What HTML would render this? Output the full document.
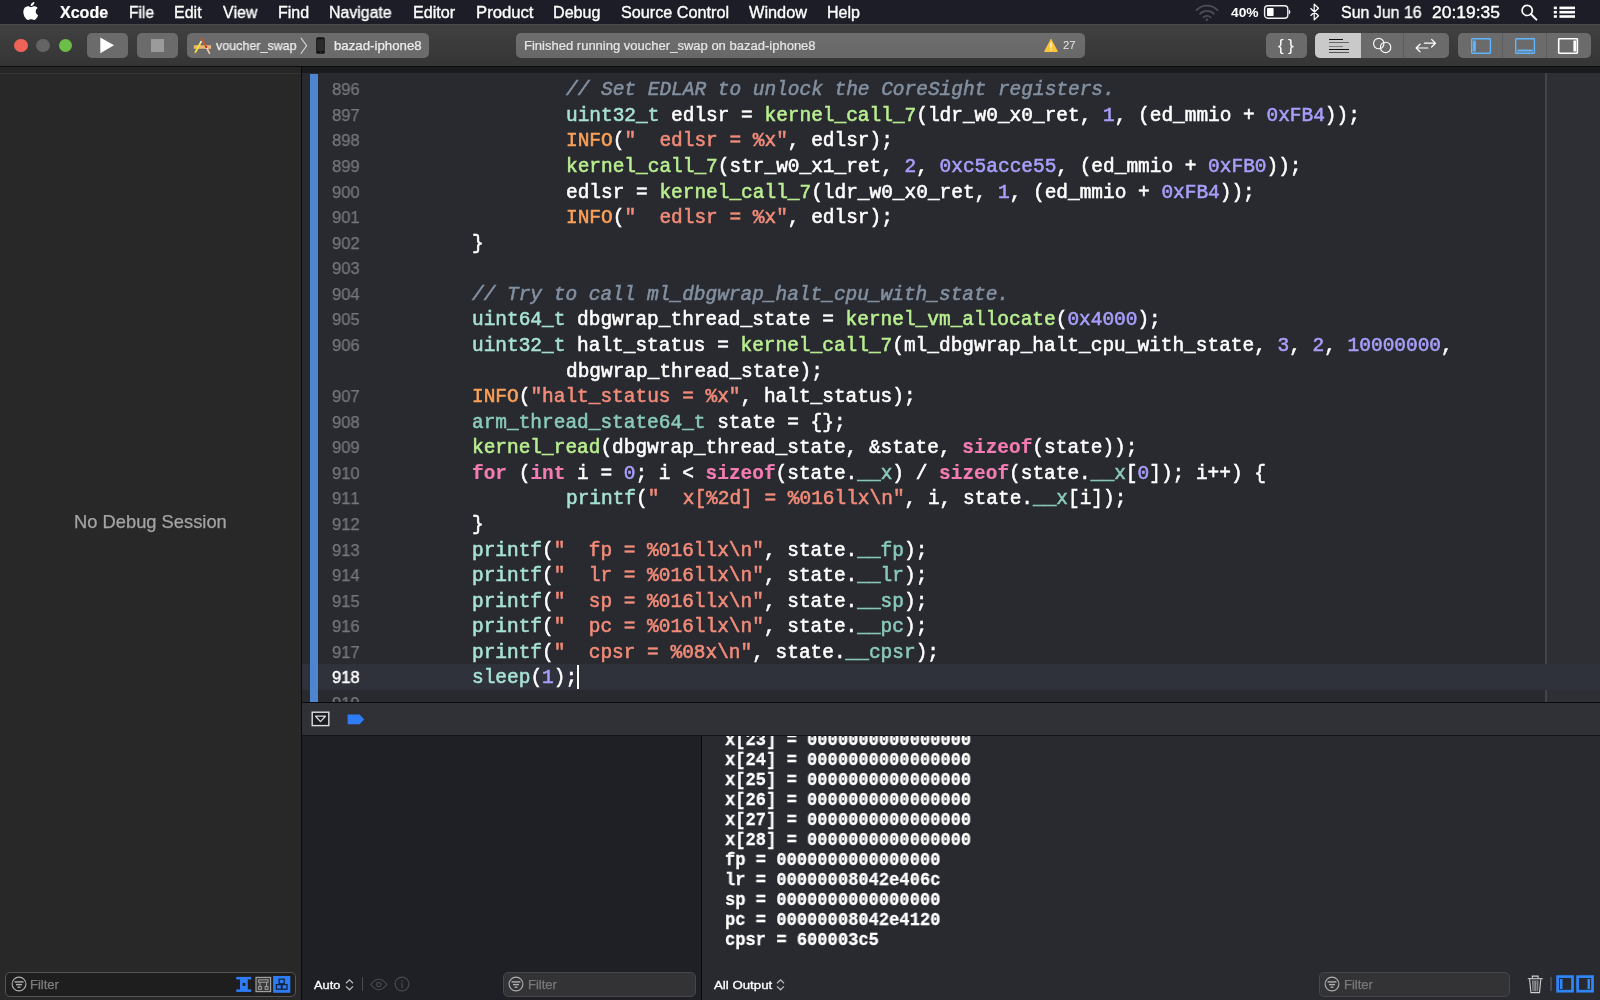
<!DOCTYPE html>
<html><head><meta charset="utf-8"><title>Xcode</title><style>
html,body{margin:0;padding:0;background:#292a30;}
body{width:1600px;height:1000px;overflow:hidden;position:relative;font-family:"Liberation Sans",sans-serif;}
.r{position:absolute;display:block;}
.t{position:absolute;white-space:pre;transform-origin:0 50%;will-change:transform;font-kerning:none;}
.t b{font-weight:700;-webkit-text-stroke:0.2px;}
</style></head><body>
<div class="r" style="left:0px;top:0px;width:1600px;height:24px;background:#1c1d26;"></div>
<div class="r" style="left:0px;top:24px;width:1600px;height:42px;background:linear-gradient(#414141,#353535);"></div>
<div class="r" style="left:0px;top:24px;width:1600px;height:1px;background:#4a4a4a;"></div>
<div class="r" style="left:0px;top:66px;width:1600px;height:1px;background:#0c0c0c;"></div>
<div class="r" style="left:0px;top:67px;width:301px;height:933px;background:#282828;"></div>
<div class="r" style="left:0px;top:67px;width:301px;height:6px;background:#262626;"></div>
<div class="r" style="left:0px;top:73px;width:301px;height:1px;background:#343434;"></div>
<div class="r" style="left:301px;top:67px;width:1px;height:933px;background:#0a0a0a;"></div>
<div class="r" style="left:302px;top:67px;width:1298px;height:6px;background:#1a1b1f;"></div>
<div class="r" style="left:302px;top:73px;width:1298px;height:629px;background:#292a30;"></div>
<div class="r" style="left:1547px;top:73px;width:53px;height:629px;background:#2e2f35;"></div>
<div class="r" style="left:1545px;top:73px;width:2px;height:629px;background:#44454b;"></div>
<div class="r" style="left:302px;top:664px;width:1298px;height:26px;background:#2f323b;"></div>
<div class="r" style="left:310px;top:74px;width:7.5px;height:628px;background:#4d85d1;"></div>
<div class="r" style="left:302px;top:702px;width:1298px;height:1px;background:#0b0b0d;"></div>
<div class="r" style="left:302px;top:703px;width:1298px;height:32px;background:#303136;"></div>
<div class="r" style="left:302px;top:735px;width:1298px;height:1.3px;background:#131418;"></div>
<div class="r" style="left:302px;top:736px;width:399px;height:264px;background:#1f2025;"></div>
<div class="r" style="left:701px;top:736px;width:1px;height:264px;background:#0a0a0c;"></div>
<div class="r" style="left:702px;top:736px;width:898px;height:264px;background:#292a30;"></div>
<div class="t" id="t1" style="left:565.60px;top:78px;height:25px;line-height:25px;font-size:19.463px;color:#ffffff;font-family:'Liberation Mono', monospace;-webkit-text-stroke:0.55px;"><span style="color:#8390a0"><i>// Set EDLAR to unlock the CoreSight registers.</i></span></div>
<div class="t" id="t2" style="left:331.80px;top:78px;height:22px;line-height:22px;font-size:17.2px;color:#77777b;font-family:'Liberation Sans', sans-serif;transform:scaleX(0.9691);-webkit-text-stroke:0.25px;">896</div>
<div class="t" id="t3" style="left:565.60px;top:104px;height:25px;line-height:25px;font-size:19.463px;color:#ffffff;font-family:'Liberation Mono', monospace;-webkit-text-stroke:0.55px;"><span style="color:#a8e2d4">uint32_t</span><span style="color:#ffffff"> edlsr = </span><span style="color:#b9ee90">kernel_call_7</span><span style="color:#ffffff">(ldr_w0_x0_ret, </span><span style="color:#a89ffa">1</span><span style="color:#ffffff">, (ed_mmio + </span><span style="color:#a89ffa">0xFB4</span><span style="color:#ffffff">));</span></div>
<div class="t" id="t4" style="left:331.80px;top:104px;height:22px;line-height:22px;font-size:17.2px;color:#77777b;font-family:'Liberation Sans', sans-serif;transform:scaleX(0.9691);-webkit-text-stroke:0.25px;">897</div>
<div class="t" id="t5" style="left:565.60px;top:129px;height:25px;line-height:25px;font-size:19.463px;color:#ffffff;font-family:'Liberation Mono', monospace;-webkit-text-stroke:0.55px;"><span style="color:#fca259">INFO</span><span style="color:#ffffff">(</span><span style="color:#f28b79">&quot;  edlsr = %x&quot;</span><span style="color:#ffffff">, edlsr);</span></div>
<div class="t" id="t6" style="left:331.80px;top:129px;height:22px;line-height:22px;font-size:17.2px;color:#77777b;font-family:'Liberation Sans', sans-serif;transform:scaleX(0.9691);-webkit-text-stroke:0.25px;">898</div>
<div class="t" id="t7" style="left:565.60px;top:155px;height:25px;line-height:25px;font-size:19.463px;color:#ffffff;font-family:'Liberation Mono', monospace;-webkit-text-stroke:0.55px;"><span style="color:#b9ee90">kernel_call_7</span><span style="color:#ffffff">(str_w0_x1_ret, </span><span style="color:#a89ffa">2</span><span style="color:#ffffff">, </span><span style="color:#a89ffa">0xc5acce55</span><span style="color:#ffffff">, (ed_mmio + </span><span style="color:#a89ffa">0xFB0</span><span style="color:#ffffff">));</span></div>
<div class="t" id="t8" style="left:331.80px;top:155px;height:22px;line-height:22px;font-size:17.2px;color:#77777b;font-family:'Liberation Sans', sans-serif;transform:scaleX(0.9691);-webkit-text-stroke:0.25px;">899</div>
<div class="t" id="t9" style="left:565.60px;top:181px;height:25px;line-height:25px;font-size:19.463px;color:#ffffff;font-family:'Liberation Mono', monospace;-webkit-text-stroke:0.55px;"><span style="color:#ffffff">edlsr = </span><span style="color:#b9ee90">kernel_call_7</span><span style="color:#ffffff">(ldr_w0_x0_ret, </span><span style="color:#a89ffa">1</span><span style="color:#ffffff">, (ed_mmio + </span><span style="color:#a89ffa">0xFB4</span><span style="color:#ffffff">));</span></div>
<div class="t" id="t10" style="left:331.80px;top:181px;height:22px;line-height:22px;font-size:17.2px;color:#77777b;font-family:'Liberation Sans', sans-serif;transform:scaleX(0.9691);-webkit-text-stroke:0.25px;">900</div>
<div class="t" id="t11" style="left:565.60px;top:206px;height:25px;line-height:25px;font-size:19.463px;color:#ffffff;font-family:'Liberation Mono', monospace;-webkit-text-stroke:0.55px;"><span style="color:#fca259">INFO</span><span style="color:#ffffff">(</span><span style="color:#f28b79">&quot;  edlsr = %x&quot;</span><span style="color:#ffffff">, edlsr);</span></div>
<div class="t" id="t12" style="left:331.80px;top:206px;height:22px;line-height:22px;font-size:17.2px;color:#77777b;font-family:'Liberation Sans', sans-serif;transform:scaleX(0.9691);-webkit-text-stroke:0.25px;">901</div>
<div class="t" id="t13" style="left:472.40px;top:232px;height:25px;line-height:25px;font-size:19.463px;color:#ffffff;font-family:'Liberation Mono', monospace;-webkit-text-stroke:0.55px;"><span style="color:#ffffff">}</span></div>
<div class="t" id="t14" style="left:331.80px;top:232px;height:22px;line-height:22px;font-size:17.2px;color:#77777b;font-family:'Liberation Sans', sans-serif;transform:scaleX(0.9691);-webkit-text-stroke:0.25px;">902</div>
<div class="t" id="t15" style="left:331.80px;top:257px;height:22px;line-height:22px;font-size:17.2px;color:#77777b;font-family:'Liberation Sans', sans-serif;transform:scaleX(0.9691);-webkit-text-stroke:0.25px;">903</div>
<div class="t" id="t16" style="left:472.40px;top:283px;height:25px;line-height:25px;font-size:19.463px;color:#ffffff;font-family:'Liberation Mono', monospace;-webkit-text-stroke:0.55px;"><span style="color:#8390a0"><i>// Try to call ml_dbgwrap_halt_cpu_with_state.</i></span></div>
<div class="t" id="t17" style="left:331.80px;top:283px;height:22px;line-height:22px;font-size:17.2px;color:#77777b;font-family:'Liberation Sans', sans-serif;transform:scaleX(0.9691);-webkit-text-stroke:0.25px;">904</div>
<div class="t" id="t18" style="left:472.40px;top:308px;height:25px;line-height:25px;font-size:19.463px;color:#ffffff;font-family:'Liberation Mono', monospace;-webkit-text-stroke:0.55px;"><span style="color:#a8e2d4">uint64_t</span><span style="color:#ffffff"> dbgwrap_thread_state = </span><span style="color:#b9ee90">kernel_vm_allocate</span><span style="color:#ffffff">(</span><span style="color:#a89ffa">0x4000</span><span style="color:#ffffff">);</span></div>
<div class="t" id="t19" style="left:331.80px;top:308px;height:22px;line-height:22px;font-size:17.2px;color:#77777b;font-family:'Liberation Sans', sans-serif;transform:scaleX(0.9691);-webkit-text-stroke:0.25px;">905</div>
<div class="t" id="t20" style="left:472.40px;top:334px;height:25px;line-height:25px;font-size:19.463px;color:#ffffff;font-family:'Liberation Mono', monospace;-webkit-text-stroke:0.55px;"><span style="color:#a8e2d4">uint32_t</span><span style="color:#ffffff"> halt_status = </span><span style="color:#b9ee90">kernel_call_7</span><span style="color:#ffffff">(ml_dbgwrap_halt_cpu_with_state, </span><span style="color:#a89ffa">3</span><span style="color:#ffffff">, </span><span style="color:#a89ffa">2</span><span style="color:#ffffff">, </span><span style="color:#a89ffa">10000000</span><span style="color:#ffffff">,</span></div>
<div class="t" id="t21" style="left:331.80px;top:334px;height:22px;line-height:22px;font-size:17.2px;color:#77777b;font-family:'Liberation Sans', sans-serif;transform:scaleX(0.9691);-webkit-text-stroke:0.25px;">906</div>
<div class="t" id="t22" style="left:565.60px;top:360px;height:25px;line-height:25px;font-size:19.463px;color:#ffffff;font-family:'Liberation Mono', monospace;-webkit-text-stroke:0.55px;"><span style="color:#ffffff">dbgwrap_thread_state);</span></div>
<div class="t" id="t23" style="left:472.40px;top:385px;height:25px;line-height:25px;font-size:19.463px;color:#ffffff;font-family:'Liberation Mono', monospace;-webkit-text-stroke:0.55px;"><span style="color:#fca259">INFO</span><span style="color:#ffffff">(</span><span style="color:#f28b79">&quot;halt_status = %x&quot;</span><span style="color:#ffffff">, halt_status);</span></div>
<div class="t" id="t24" style="left:331.80px;top:385px;height:22px;line-height:22px;font-size:17.2px;color:#77777b;font-family:'Liberation Sans', sans-serif;transform:scaleX(0.9691);-webkit-text-stroke:0.25px;">907</div>
<div class="t" id="t25" style="left:472.40px;top:411px;height:25px;line-height:25px;font-size:19.463px;color:#ffffff;font-family:'Liberation Mono', monospace;-webkit-text-stroke:0.55px;"><span style="color:#8acabb">arm_thread_state64_t</span><span style="color:#ffffff"> state = {};</span></div>
<div class="t" id="t26" style="left:331.80px;top:411px;height:22px;line-height:22px;font-size:17.2px;color:#77777b;font-family:'Liberation Sans', sans-serif;transform:scaleX(0.9691);-webkit-text-stroke:0.25px;">908</div>
<div class="t" id="t27" style="left:472.40px;top:436px;height:25px;line-height:25px;font-size:19.463px;color:#ffffff;font-family:'Liberation Mono', monospace;-webkit-text-stroke:0.55px;"><span style="color:#b9ee90">kernel_read</span><span style="color:#ffffff">(dbgwrap_thread_state, &amp;state, </span><span style="color:#f47cb2"><b>sizeof</b></span><span style="color:#ffffff">(state));</span></div>
<div class="t" id="t28" style="left:331.80px;top:436px;height:22px;line-height:22px;font-size:17.2px;color:#77777b;font-family:'Liberation Sans', sans-serif;transform:scaleX(0.9691);-webkit-text-stroke:0.25px;">909</div>
<div class="t" id="t29" style="left:472.40px;top:462px;height:25px;line-height:25px;font-size:19.463px;color:#ffffff;font-family:'Liberation Mono', monospace;-webkit-text-stroke:0.55px;"><span style="color:#f47cb2"><b>for</b></span><span style="color:#ffffff"> (</span><span style="color:#f47cb2"><b>int</b></span><span style="color:#ffffff"> i = </span><span style="color:#a89ffa">0</span><span style="color:#ffffff">; i &lt; </span><span style="color:#f47cb2"><b>sizeof</b></span><span style="color:#ffffff">(state.</span><span style="color:#8acabb">__x</span><span style="color:#ffffff">) / </span><span style="color:#f47cb2"><b>sizeof</b></span><span style="color:#ffffff">(state.</span><span style="color:#8acabb">__x</span><span style="color:#ffffff">[</span><span style="color:#a89ffa">0</span><span style="color:#ffffff">]); i++) {</span></div>
<div class="t" id="t30" style="left:331.80px;top:462px;height:22px;line-height:22px;font-size:17.2px;color:#77777b;font-family:'Liberation Sans', sans-serif;transform:scaleX(0.9691);-webkit-text-stroke:0.25px;">910</div>
<div class="t" id="t31" style="left:565.60px;top:487px;height:25px;line-height:25px;font-size:19.463px;color:#ffffff;font-family:'Liberation Mono', monospace;-webkit-text-stroke:0.55px;"><span style="color:#a8e2d4">printf</span><span style="color:#ffffff">(</span><span style="color:#f28b79">&quot;  x[%2d] = %016llx\n&quot;</span><span style="color:#ffffff">, i, state.</span><span style="color:#8acabb">__x</span><span style="color:#ffffff">[i]);</span></div>
<div class="t" id="t32" style="left:331.80px;top:487px;height:22px;line-height:22px;font-size:17.2px;color:#77777b;font-family:'Liberation Sans', sans-serif;transform:scaleX(0.9691);-webkit-text-stroke:0.25px;">911</div>
<div class="t" id="t33" style="left:472.40px;top:513px;height:25px;line-height:25px;font-size:19.463px;color:#ffffff;font-family:'Liberation Mono', monospace;-webkit-text-stroke:0.55px;"><span style="color:#ffffff">}</span></div>
<div class="t" id="t34" style="left:331.80px;top:513px;height:22px;line-height:22px;font-size:17.2px;color:#77777b;font-family:'Liberation Sans', sans-serif;transform:scaleX(0.9691);-webkit-text-stroke:0.25px;">912</div>
<div class="t" id="t35" style="left:472.40px;top:539px;height:25px;line-height:25px;font-size:19.463px;color:#ffffff;font-family:'Liberation Mono', monospace;-webkit-text-stroke:0.55px;"><span style="color:#a8e2d4">printf</span><span style="color:#ffffff">(</span><span style="color:#f28b79">&quot;  fp = %016llx\n&quot;</span><span style="color:#ffffff">, state.</span><span style="color:#8acabb">__fp</span><span style="color:#ffffff">);</span></div>
<div class="t" id="t36" style="left:331.80px;top:539px;height:22px;line-height:22px;font-size:17.2px;color:#77777b;font-family:'Liberation Sans', sans-serif;transform:scaleX(0.9691);-webkit-text-stroke:0.25px;">913</div>
<div class="t" id="t37" style="left:472.40px;top:564px;height:25px;line-height:25px;font-size:19.463px;color:#ffffff;font-family:'Liberation Mono', monospace;-webkit-text-stroke:0.55px;"><span style="color:#a8e2d4">printf</span><span style="color:#ffffff">(</span><span style="color:#f28b79">&quot;  lr = %016llx\n&quot;</span><span style="color:#ffffff">, state.</span><span style="color:#8acabb">__lr</span><span style="color:#ffffff">);</span></div>
<div class="t" id="t38" style="left:331.80px;top:564px;height:22px;line-height:22px;font-size:17.2px;color:#77777b;font-family:'Liberation Sans', sans-serif;transform:scaleX(0.9691);-webkit-text-stroke:0.25px;">914</div>
<div class="t" id="t39" style="left:472.40px;top:590px;height:25px;line-height:25px;font-size:19.463px;color:#ffffff;font-family:'Liberation Mono', monospace;-webkit-text-stroke:0.55px;"><span style="color:#a8e2d4">printf</span><span style="color:#ffffff">(</span><span style="color:#f28b79">&quot;  sp = %016llx\n&quot;</span><span style="color:#ffffff">, state.</span><span style="color:#8acabb">__sp</span><span style="color:#ffffff">);</span></div>
<div class="t" id="t40" style="left:331.80px;top:590px;height:22px;line-height:22px;font-size:17.2px;color:#77777b;font-family:'Liberation Sans', sans-serif;transform:scaleX(0.9691);-webkit-text-stroke:0.25px;">915</div>
<div class="t" id="t41" style="left:472.40px;top:615px;height:25px;line-height:25px;font-size:19.463px;color:#ffffff;font-family:'Liberation Mono', monospace;-webkit-text-stroke:0.55px;"><span style="color:#a8e2d4">printf</span><span style="color:#ffffff">(</span><span style="color:#f28b79">&quot;  pc = %016llx\n&quot;</span><span style="color:#ffffff">, state.</span><span style="color:#8acabb">__pc</span><span style="color:#ffffff">);</span></div>
<div class="t" id="t42" style="left:331.80px;top:615px;height:22px;line-height:22px;font-size:17.2px;color:#77777b;font-family:'Liberation Sans', sans-serif;transform:scaleX(0.9691);-webkit-text-stroke:0.25px;">916</div>
<div class="t" id="t43" style="left:472.40px;top:641px;height:25px;line-height:25px;font-size:19.463px;color:#ffffff;font-family:'Liberation Mono', monospace;-webkit-text-stroke:0.55px;"><span style="color:#a8e2d4">printf</span><span style="color:#ffffff">(</span><span style="color:#f28b79">&quot;  cpsr = %08x\n&quot;</span><span style="color:#ffffff">, state.</span><span style="color:#8acabb">__cpsr</span><span style="color:#ffffff">);</span></div>
<div class="t" id="t44" style="left:331.80px;top:641px;height:22px;line-height:22px;font-size:17.2px;color:#77777b;font-family:'Liberation Sans', sans-serif;transform:scaleX(0.9691);-webkit-text-stroke:0.25px;">917</div>
<div class="t" id="t45" style="left:472.40px;top:666px;height:25px;line-height:25px;font-size:19.463px;color:#ffffff;font-family:'Liberation Mono', monospace;-webkit-text-stroke:0.55px;"><span style="color:#a8e2d4">sleep</span><span style="color:#ffffff">(</span><span style="color:#a89ffa">1</span><span style="color:#ffffff">);</span></div>
<div class="t" id="t46" style="left:331.80px;top:666px;height:22px;line-height:22px;font-size:17.2px;color:#ffffff;font-family:'Liberation Sans', sans-serif;transform:scaleX(0.9691);-webkit-text-stroke:0.45px;">918</div>
<div class="r" style="left:577.4px;top:665px;width:1.7px;height:24px;background:#ffffff;"></div>
<div class="r" style="left:302px;top:690px;width:200px;height:12px;overflow:hidden">
<div class="t" style="left:30.2px;top:2px;height:22px;line-height:22px;font-size:17.2px;color:#77777b;transform:scaleX(0.969);-webkit-text-stroke:0.25px;">919</div>
</div>
<div class="r" style="left:702px;top:736px;width:898px;height:264px;overflow:hidden">
<div class="t" style="left:22.90px;top:-7px;height:24px;line-height:24px;font-size:18.4px;font-weight:700;color:#fff;font-family:'Liberation Mono', monospace;-webkit-text-stroke:0.3px;transform:scaleX(0.9294);">x[23] = 0000000000000000</div>
<div class="t" style="left:22.90px;top:13px;height:24px;line-height:24px;font-size:18.4px;font-weight:700;color:#fff;font-family:'Liberation Mono', monospace;-webkit-text-stroke:0.3px;transform:scaleX(0.9294);">x[24] = 0000000000000000</div>
<div class="t" style="left:22.90px;top:33px;height:24px;line-height:24px;font-size:18.4px;font-weight:700;color:#fff;font-family:'Liberation Mono', monospace;-webkit-text-stroke:0.3px;transform:scaleX(0.9294);">x[25] = 0000000000000000</div>
<div class="t" style="left:22.90px;top:53px;height:24px;line-height:24px;font-size:18.4px;font-weight:700;color:#fff;font-family:'Liberation Mono', monospace;-webkit-text-stroke:0.3px;transform:scaleX(0.9294);">x[26] = 0000000000000000</div>
<div class="t" style="left:22.90px;top:73px;height:24px;line-height:24px;font-size:18.4px;font-weight:700;color:#fff;font-family:'Liberation Mono', monospace;-webkit-text-stroke:0.3px;transform:scaleX(0.9294);">x[27] = 0000000000000000</div>
<div class="t" style="left:22.90px;top:93px;height:24px;line-height:24px;font-size:18.4px;font-weight:700;color:#fff;font-family:'Liberation Mono', monospace;-webkit-text-stroke:0.3px;transform:scaleX(0.9294);">x[28] = 0000000000000000</div>
<div class="t" style="left:22.90px;top:113px;height:24px;line-height:24px;font-size:18.4px;font-weight:700;color:#fff;font-family:'Liberation Mono', monospace;-webkit-text-stroke:0.3px;transform:scaleX(0.9294);">fp = 0000000000000000</div>
<div class="t" style="left:22.90px;top:133px;height:24px;line-height:24px;font-size:18.4px;font-weight:700;color:#fff;font-family:'Liberation Mono', monospace;-webkit-text-stroke:0.3px;transform:scaleX(0.9294);">lr = 00000008042e406c</div>
<div class="t" style="left:22.90px;top:153px;height:24px;line-height:24px;font-size:18.4px;font-weight:700;color:#fff;font-family:'Liberation Mono', monospace;-webkit-text-stroke:0.3px;transform:scaleX(0.9294);">sp = 0000000000000000</div>
<div class="t" style="left:22.90px;top:173px;height:24px;line-height:24px;font-size:18.4px;font-weight:700;color:#fff;font-family:'Liberation Mono', monospace;-webkit-text-stroke:0.3px;transform:scaleX(0.9294);">pc = 00000008042e4120</div>
<div class="t" style="left:22.90px;top:193px;height:24px;line-height:24px;font-size:18.4px;font-weight:700;color:#fff;font-family:'Liberation Mono', monospace;-webkit-text-stroke:0.3px;transform:scaleX(0.9294);">cpsr = 600003c5</div>
</div>
<svg class="r" style="left:20.5px;top:0.5px;" width="20" height="20" viewBox="2.5 1 19.5 22"><path d="M18.71 19.5c-.83 1.24-1.71 2.45-3.05 2.47-1.34.03-1.77-.79-3.29-.79-1.53 0-2 .77-3.27.82-1.31.05-2.3-1.32-3.14-2.53C4.25 17 2.94 12.45 4.7 9.39c.87-1.52 2.43-2.48 4.12-2.51 1.28-.02 2.5.87 3.29.87.78 0 2.26-1.07 3.81-.91.65.03 2.47.26 3.64 1.98-.09.06-2.17 1.28-2.15 3.81.03 3.02 2.65 4.03 2.68 4.04-.03.07-.42 1.44-1.38 2.83M13 3.5c.73-.83 1.94-1.46 2.94-1.5.13 1.17-.34 2.35-1.04 3.19-.69.85-1.83 1.51-2.95 1.42-.15-1.15.41-2.35 1.05-3.11z" fill="#fff"/></svg>
<div class="t" id="t47" style="left:60.30px;top:2px;height:21px;line-height:21px;font-size:16px;color:#fff;font-family:'Liberation Sans', sans-serif;font-weight:700;transform:scaleX(1.0018);-webkit-text-stroke:0.2px;">Xcode</div>
<div class="t" id="t48" style="left:129.00px;top:2px;height:21px;line-height:21px;font-size:16px;color:#fff;font-family:'Liberation Sans', sans-serif;transform:scaleX(0.9697);-webkit-text-stroke:0.35px;">File</div>
<div class="t" id="t49" style="left:174.00px;top:2px;height:21px;line-height:21px;font-size:16px;color:#fff;font-family:'Liberation Sans', sans-serif;transform:scaleX(0.9972);-webkit-text-stroke:0.35px;">Edit</div>
<div class="t" id="t50" style="left:222.80px;top:2px;height:21px;line-height:21px;font-size:16px;color:#fff;font-family:'Liberation Sans', sans-serif;transform:scaleX(0.9859);-webkit-text-stroke:0.35px;">View</div>
<div class="t" id="t51" style="left:277.50px;top:2px;height:21px;line-height:21px;font-size:16px;color:#fff;font-family:'Liberation Sans', sans-serif;transform:scaleX(0.9928);-webkit-text-stroke:0.35px;">Find</div>
<div class="t" id="t52" style="left:329.00px;top:2px;height:21px;line-height:21px;font-size:16px;color:#fff;font-family:'Liberation Sans', sans-serif;transform:scaleX(0.9912);-webkit-text-stroke:0.35px;">Navigate</div>
<div class="t" id="t53" style="left:412.50px;top:2px;height:21px;line-height:21px;font-size:16px;color:#fff;font-family:'Liberation Sans', sans-serif;transform:scaleX(1.0096);-webkit-text-stroke:0.35px;">Editor</div>
<div class="t" id="t54" style="left:475.60px;top:2px;height:21px;line-height:21px;font-size:16px;color:#fff;font-family:'Liberation Sans', sans-serif;transform:scaleX(1.0428);-webkit-text-stroke:0.35px;">Product</div>
<div class="t" id="t55" style="left:553.00px;top:2px;height:21px;line-height:21px;font-size:16px;color:#fff;font-family:'Liberation Sans', sans-serif;transform:scaleX(1.0073);-webkit-text-stroke:0.35px;">Debug</div>
<div class="t" id="t56" style="left:621.00px;top:2px;height:21px;line-height:21px;font-size:16px;color:#fff;font-family:'Liberation Sans', sans-serif;transform:scaleX(1.0120);-webkit-text-stroke:0.35px;">Source Control</div>
<div class="t" id="t57" style="left:749.00px;top:2px;height:21px;line-height:21px;font-size:16px;color:#fff;font-family:'Liberation Sans', sans-serif;transform:scaleX(1.0192);-webkit-text-stroke:0.35px;">Window</div>
<div class="t" id="t58" style="left:826.50px;top:2px;height:21px;line-height:21px;font-size:16px;color:#fff;font-family:'Liberation Sans', sans-serif;transform:scaleX(1.0028);-webkit-text-stroke:0.35px;">Help</div>
<div class="t" id="t59" style="left:1231.20px;top:4px;height:18px;line-height:18px;font-size:13.6px;color:#fff;font-family:'Liberation Sans', sans-serif;font-weight:700;transform:scaleX(1.0140);">40%</div>
<div class="t" id="t60" style="left:1341.30px;top:2px;height:21px;line-height:21px;font-size:16px;color:#fff;font-family:'Liberation Sans', sans-serif;transform:scaleX(0.9956);-webkit-text-stroke:0.35px;">Sun Jun 16</div>
<div class="t" id="t61" style="left:1431.60px;top:2px;height:21px;line-height:21px;font-size:16px;color:#fff;font-family:'Liberation Sans', sans-serif;transform:scaleX(1.0918);-webkit-text-stroke:0.35px;">20:19:35</div>
<svg class="r" style="left:1195px;top:4px;" width="24" height="18" viewBox="0 0 24 18"><g fill="none" stroke="#4c4d55" stroke-width="1.8" stroke-linecap="round"><path d="M1.5 6.2a14.5 14.5 0 0 1 21 0"/><path d="M5 9.9a9.7 9.7 0 0 1 14 0"/><path d="M8.5 13.4a4.9 4.9 0 0 1 7 0"/></g><circle cx="12" cy="15.8" r="1.3" fill="#4c4d55"/></svg>
<svg class="r" style="left:1263px;top:4px;" width="29" height="16" viewBox="0 0 29 16"><rect x="1.6" y="1.7" width="23.2" height="12.6" rx="3.2" fill="none" stroke="#f0f0f0" stroke-width="1.4"/><rect x="4" y="4" width="6.6" height="8" rx="0.8" fill="#fff"/><path d="M25.9 5.7v4.6c1.9-.4 1.9-4.2 0-4.6z" fill="#f0f0f0"/></svg>
<svg class="r" style="left:1309px;top:3px;" width="12" height="18" viewBox="0 0 12 18"><path d="M1.5 5.2l8 7.6-4.3 4V1.2l4.3 4-8 7.6" fill="none" stroke="#fff" stroke-width="1.25" stroke-linejoin="round"/></svg>
<svg class="r" style="left:1520px;top:3px;" width="18" height="18" viewBox="0 0 18 18"><circle cx="7.2" cy="7.4" r="5.1" fill="none" stroke="#fff" stroke-width="1.7"/><path d="M11 11.2l5.4 5.4" stroke="#fff" stroke-width="2" stroke-linecap="round"/></svg>
<svg class="r" style="left:1552px;top:4px;" width="24" height="16" viewBox="0 0 24 16"><g fill="#fff"><rect x="1.8" y="2.6" width="3.1" height="2.6"/><rect x="7.4" y="2.6" width="15.6" height="2.6"/><rect x="1.8" y="6.9" width="3.1" height="2.6"/><rect x="7.4" y="6.9" width="15.6" height="2.6"/><rect x="1.8" y="11.2" width="3.1" height="2.6"/><rect x="7.4" y="11.2" width="15.6" height="2.6"/></g></svg>
<div class="r" style="left:14.250000000000002px;top:38.65px;width:13.7px;height:13.7px;background:#ee6358;border-radius:50%;"></div>
<div class="r" style="left:36.4px;top:38.65px;width:13.7px;height:13.7px;background:#646464;border-radius:50%;"></div>
<div class="r" style="left:58.74999999999999px;top:38.65px;width:13.7px;height:13.7px;background:#6dbe48;border-radius:50%;"></div>
<div class="r" style="left:87px;top:33px;width:41px;height:25px;background:#6b6b6b;border-radius:5px;"></div>
<svg class="r" style="left:100px;top:37px;" width="15" height="17" viewBox="0 0 15 17"><path d="M0.3 0.6L14 8.3 0.3 16.2z" fill="#fff"/></svg>
<div class="r" style="left:136.5px;top:33px;width:41.5px;height:25px;background:#6b6b6b;border-radius:5px;"></div>
<div class="r" style="left:150.6px;top:39px;width:13.4px;height:13px;background:#9b9b9b;"></div>
<div class="r" style="left:186.5px;top:33px;width:242.5px;height:25px;background:#6b6b6b;border-radius:5px;"></div>
<svg class="r" style="left:193px;top:36.5px;" width="19" height="18" viewBox="0 0 19 18"><rect x="0.85" y="8.1" width="17.15" height="3.8" fill="#e8b477"/><rect x="0.85" y="7.6" width="17.15" height="0.6" fill="#55607a" opacity="0.55"/><rect x="0.85" y="11.9" width="17.15" height="0.6" fill="#55607a" opacity="0.55"/>
<path d="M7.4 6L2.4 15.3" stroke="#f6e02e" stroke-width="1.9"/><path d="M8.4 4.2L7.4 6.1" stroke="#f4f2ee" stroke-width="1.8"/><path d="M2.5 15L1.9 16.2" stroke="#d8b45a" stroke-width="1.4"/>
<path d="M8.5 1L13.1 9.8" stroke="#d4561f" stroke-width="1.6" stroke-linecap="round"/><circle cx="13.3" cy="10" r="0.95" fill="#c2140c"/><path d="M13.7 10.8L14.7 12.7" stroke="#dedede" stroke-width="1.6"/><path d="M14.7 12.7L16.4 16.2" stroke="#f0c2a2" stroke-width="1.8" stroke-linecap="round"/></svg>
<div class="t" id="t62" style="left:215.90px;top:37px;height:17px;line-height:17px;font-size:13px;color:#ececec;font-family:'Liberation Sans', sans-serif;transform:scaleX(0.9615);-webkit-text-stroke:0.25px;">voucher_swap</div>
<svg class="r" style="left:300px;top:37px;" width="8" height="18" viewBox="0 0 8 18"><path d="M0.8 0.8L6.6 8.8 0.8 16.8" fill="none" stroke="#dcdcdc" stroke-width="1.1"/></svg>
<svg class="r" style="left:315.5px;top:36.8px;" width="9" height="17" viewBox="0 0 9 17"><rect x="0.2" y="0.2" width="8.6" height="16.6" rx="1.6" fill="#131313"/><rect x="1.1" y="2.2" width="6.8" height="11.8" fill="#2c2c2e"/><circle cx="4.5" cy="15.3" r="0.8" fill="#3a3a3a"/></svg>
<div class="t" id="t63" style="left:333.60px;top:37px;height:17px;line-height:17px;font-size:13px;color:#ececec;font-family:'Liberation Sans', sans-serif;transform:scaleX(1.0194);-webkit-text-stroke:0.25px;">bazad-iphone8</div>
<div class="r" style="left:515.5px;top:33px;width:569px;height:25px;background:linear-gradient(#6e6e6e,#686868);border-radius:5px;"></div>
<div class="t" id="t64" style="left:524.40px;top:38px;height:16px;line-height:16px;font-size:12px;color:#e6e6e6;font-family:'Liberation Sans', sans-serif;transform:scaleX(1.0846);-webkit-text-stroke:0.2px;">Finished running voucher_swap on bazad-iphone8</div>
<svg class="r" style="left:1042.7px;top:38.3px;" width="16" height="15" viewBox="0 0 16 15"><path d="M7.6 1.2Q8 0.5 8.4 1.2L14.7 13Q15 13.9 14.2 14H1.8Q1 13.9 1.3 13z" fill="#fdc43c"/><rect x="7.3" y="4.6" width="1.5" height="5.2" rx="0.5" fill="#fff6dc"/><rect x="7.3" y="10.8" width="1.5" height="1.6" rx="0.5" fill="#fff6dc"/></svg>
<div class="t" id="t65" style="left:1062.60px;top:38px;height:14px;line-height:14px;font-size:10.5px;color:#e6e6e6;font-family:'Liberation Sans', sans-serif;transform:scaleX(1.0695);">27</div>
<div class="r" style="left:1265.5px;top:33px;width:41px;height:25px;background:#6b6b6b;border-radius:5px;"></div>
<div class="t" id="t66" style="left:1278.20px;top:35px;height:22px;line-height:22px;font-size:17px;color:#fff;font-family:'Liberation Sans', sans-serif;">{</div>
<div class="t" id="t67" style="left:1287.60px;top:35px;height:22px;line-height:22px;font-size:17px;color:#fff;font-family:'Liberation Sans', sans-serif;">}</div>
<div class="r" style="left:1315.2px;top:33px;width:133.8px;height:25px;background:#6b6b6b;border-radius:5px;"></div>
<div class="r" style="left:1315.2px;top:33px;width:45.8px;height:25px;background:#c9c9c9;border-radius:5px 0 0 5px;"></div>
<div class="r" style="left:1403px;top:33px;width:1px;height:25px;background:#5d5d5d;"></div>
<div class="r" style="left:1329px;top:38.9px;width:14px;height:1.3px;background:#111;"></div>
<div class="r" style="left:1329px;top:42.199999999999996px;width:19.799999999999955px;height:1.3px;background:#666;"></div>
<div class="r" style="left:1329px;top:45.5px;width:14px;height:1.3px;background:#7a7a7a;"></div>
<div class="r" style="left:1329px;top:48.9px;width:19.799999999999955px;height:1.3px;background:#111;"></div>
<div class="r" style="left:1329px;top:51.8px;width:19.799999999999955px;height:1.3px;background:#555;"></div>
<svg class="r" style="left:1371px;top:36px;" width="22" height="19" viewBox="0 0 22 19"><circle cx="7.75" cy="7.6" r="5.2" fill="none" stroke="#fff" stroke-width="1.1"/><circle cx="14.6" cy="11.4" r="5.2" fill="none" stroke="#fff" stroke-width="1.1"/></svg>
<svg class="r" style="left:1413px;top:37px;" width="26" height="17" viewBox="0 0 26 17"><g fill="none" stroke="#fff" stroke-width="1.2" stroke-linecap="round" stroke-linejoin="round"><path d="M11.4 6.2h11M18.6 2.4l3.9 3.8-3.9 3.8"/><path d="M14.8 11h-11.6M7 7.2l-3.9 3.8 3.9 3.8"/></g></svg>
<div class="r" style="left:1458px;top:33px;width:133px;height:25px;background:#6b6b6b;border-radius:5px;"></div>
<div class="r" style="left:1502px;top:33px;width:1px;height:25px;background:#5d5d5d;"></div>
<div class="r" style="left:1545.6px;top:33px;width:1px;height:25px;background:#5d5d5d;"></div>
<svg class="r" style="left:1470px;top:36.5px;" width="22" height="18" viewBox="0 0 22 18"><rect x="1.7" y="1.7" width="18.7" height="14.5" rx="0.6" fill="none" stroke="#5fb6ff" stroke-width="1.4"/><rect x="3.1" y="3.6" width="2.7" height="10.8" fill="#5fb6ff"/></svg>
<svg class="r" style="left:1513.5px;top:36.5px;" width="22" height="18" viewBox="0 0 22 18"><rect x="1.7" y="1.7" width="18.7" height="14.5" rx="0.6" fill="none" stroke="#5fb6ff" stroke-width="1.4"/><rect x="3.3" y="12.6" width="15.4" height="1.9" fill="#5fb6ff"/></svg>
<svg class="r" style="left:1556.7px;top:36.5px;" width="22" height="18" viewBox="0 0 22 18"><rect x="1.7" y="1.7" width="18.7" height="14.5" rx="0.6" fill="none" stroke="#fff" stroke-width="1.6"/><rect x="16.4" y="3.5" width="2.8" height="11" fill="#fff"/></svg>
<div class="t" id="t68" style="left:74.00px;top:511px;height:23px;line-height:23px;font-size:17.8px;color:#a4a4a4;font-family:'Liberation Sans', sans-serif;transform:scaleX(1.0305);-webkit-text-stroke:0.25px;">No Debug Session</div>
<svg class="r" style="left:310.6px;top:711px;" width="19" height="16" viewBox="0 0 19 16"><rect x="1.2" y="1.2" width="16.6" height="13.4" fill="#1c1d21" stroke="#dedede" stroke-width="1.4"/><path d="M4.6 5.2h9.8l-4.9 5.4z" fill="none" stroke="#dedede" stroke-width="1.3" stroke-linejoin="round"/></svg>
<svg class="r" style="left:346.9px;top:713.5px;" width="18" height="11" viewBox="0 0 18 11"><path d="M0.6 0.6h12l4.6 4.8-4.6 4.8h-12z" fill="#2f7df6"/></svg>
<div class="r" style="left:5.2px;top:972px;width:291px;height:24.5px;background:#1e1e1e;border:1px solid #555;border-radius:5px;box-sizing:border-box;"></div>
<svg class="r" style="left:10.8px;top:976.2px;" width="16" height="16" viewBox="0 0 16 16"><circle cx="8" cy="8" r="6.9" fill="none" stroke="#b0b0b0" stroke-width="1.1"/><g fill="#b0b0b0"><rect x="3.5" y="5.2" width="9" height="1.4"/><rect x="5" y="7.9" width="6" height="1.4"/><rect x="6.5" y="10.5" width="3" height="1.3"/></g></svg>
<div class="t" id="t69" style="left:30.40px;top:976px;height:17px;line-height:17px;font-size:13px;color:#7e7e7e;font-family:'Liberation Sans', sans-serif;transform:scaleX(0.9865);-webkit-text-stroke:0.25px;">Filter</div>
<svg class="r" style="left:236px;top:976px;" width="16" height="17" viewBox="0 0 16 17"><rect x="0.25" y="0.9" width="15" height="2.5" fill="#2f7df6"/><rect x="0.25" y="13.4" width="15" height="2.5" fill="#2f7df6"/><rect x="4" y="3" width="7.8" height="11" fill="#2f7df6"/><rect x="6.6" y="6.9" width="2.8" height="3" fill="#1e1e1e"/></svg>
<svg class="r" style="left:254.5px;top:976px;" width="17" height="17" viewBox="0 0 17 17"><rect x="1" y="1.4" width="14.6" height="14.2" fill="#3b3b3b" stroke="#a0a0a0" stroke-width="1.2"/><rect x="3.6" y="3.8" width="9.4" height="2.4" fill="none" stroke="#a0a0a0" stroke-width="1"/><path d="M5 6.2v4.3M11.6 6.2v4.3" stroke="#a0a0a0" stroke-width="1"/><rect x="3.6" y="10.6" width="2.8" height="2.8" fill="none" stroke="#a0a0a0" stroke-width="1"/><rect x="10.2" y="10.6" width="2.8" height="2.8" fill="none" stroke="#a0a0a0" stroke-width="1"/></svg>
<svg class="r" style="left:273px;top:976px;" width="18" height="17" viewBox="0 0 18 17"><rect x="0.1" y="0" width="17.2" height="16.8" fill="#2f7df6"/><g fill="none" stroke="#14233d" stroke-width="1.3"><rect x="6.2" y="3.2" width="5" height="4.6"/><rect x="3.4" y="8.6" width="5" height="4.6"/><rect x="9" y="8.6" width="5" height="4.6"/></g></svg>
<div class="t" id="t70" style="left:313.50px;top:977px;height:15px;line-height:15px;font-size:11.6px;color:#fff;font-family:'Liberation Sans', sans-serif;transform:scaleX(1.1023);-webkit-text-stroke:0.3px;">Auto</div>
<svg class="r" style="left:345px;top:978.5px;" width="9" height="12" viewBox="0 0 9 12"><path d="M1 4.3l3.5-3.4 3.5 3.4M1 7.4l3.5 3.4 3.5-3.4" fill="none" stroke="#bdbdbd" stroke-width="1.2"/></svg>
<div class="r" style="left:362px;top:977px;width:1.2px;height:14px;background:#48494e;"></div>
<svg class="r" style="left:369.5px;top:977.5px;" width="18" height="13" viewBox="0 0 18 13"><path d="M0.8 6.5Q8.7-4 16.8 6.5Q8.7 17 0.8 6.5z" fill="none" stroke="#494a50" stroke-width="1.2"/><circle cx="8.8" cy="6.5" r="2.1" fill="none" stroke="#494a50" stroke-width="1.2"/></svg>
<svg class="r" style="left:393.5px;top:976px;" width="16" height="16" viewBox="0 0 16 16"><circle cx="8" cy="8" r="6.9" fill="none" stroke="#494a50" stroke-width="1.2"/><rect x="7.4" y="6.8" width="1.3" height="5" fill="#494a50"/><rect x="7.4" y="4.2" width="1.3" height="1.4" fill="#494a50"/></svg>
<div class="r" style="left:503px;top:972px;width:192.7px;height:24.5px;background:#333336;border:1px solid #47474b;border-radius:5px;box-sizing:border-box;"></div>
<svg class="r" style="left:508.1px;top:976.1px;" width="16" height="16" viewBox="0 0 16 16"><circle cx="8" cy="8" r="6.9" fill="none" stroke="#b0b0b0" stroke-width="1.1"/><g fill="#b0b0b0"><rect x="3.5" y="5.2" width="9" height="1.4"/><rect x="5" y="7.9" width="6" height="1.4"/><rect x="6.5" y="10.5" width="3" height="1.3"/></g></svg>
<div class="t" id="t71" style="left:528.00px;top:976px;height:17px;line-height:17px;font-size:13px;color:#79797c;font-family:'Liberation Sans', sans-serif;transform:scaleX(0.9969);-webkit-text-stroke:0.25px;">Filter</div>
<div class="t" id="t72" style="left:713.60px;top:977px;height:15px;line-height:15px;font-size:11.6px;color:#fff;font-family:'Liberation Sans', sans-serif;transform:scaleX(1.1429);-webkit-text-stroke:0.3px;">All Output</div>
<svg class="r" style="left:776px;top:978.5px;" width="9" height="12" viewBox="0 0 9 12"><path d="M1 4.3l3.5-3.4 3.5 3.4M1 7.4l3.5 3.4 3.5-3.4" fill="none" stroke="#bdbdbd" stroke-width="1.2"/></svg>
<div class="r" style="left:1319.4px;top:972px;width:190.3px;height:24.5px;background:#333336;border:1px solid #47474b;border-radius:5px;box-sizing:border-box;"></div>
<svg class="r" style="left:1323.6px;top:976.1px;" width="16" height="16" viewBox="0 0 16 16"><circle cx="8" cy="8" r="6.9" fill="none" stroke="#b0b0b0" stroke-width="1.1"/><g fill="#b0b0b0"><rect x="3.5" y="5.2" width="9" height="1.4"/><rect x="5" y="7.9" width="6" height="1.4"/><rect x="6.5" y="10.5" width="3" height="1.3"/></g></svg>
<div class="t" id="t73" style="left:1343.75px;top:976px;height:17px;line-height:17px;font-size:13px;color:#79797c;font-family:'Liberation Sans', sans-serif;transform:scaleX(0.9969);-webkit-text-stroke:0.25px;">Filter</div>
<svg class="r" style="left:1527px;top:974.5px;" width="17" height="19" viewBox="0 0 17 19"><g fill="none" stroke="#d0d0d0" stroke-width="1.1"><path d="M5.3 3.2V1.1h5.8v2.1"/><path d="M0.8 3.7h15"/><path d="M2.6 4.2l1.3 13.4h8.6l1.3-13.4"/></g><path d="M5 5.6h6.6l-.5 10.6H5.5z" fill="#8d8d8d"/><path d="M6.9 5.6v10.6M9.6 5.6v10.6" stroke="#3a3a3d" stroke-width="0.7"/></svg>
<div class="r" style="left:1550.2px;top:976.6px;width:1.5px;height:14.4px;background:#48494e;"></div>
<svg class="r" style="left:1556px;top:975px;" width="18" height="18" viewBox="0 0 18 18"><rect x="1.6" y="1.6" width="14.9" height="14.6" fill="none" stroke="#2e86fb" stroke-width="2.7"/><rect x="4" y="4" width="2.5" height="10" fill="#2e86fb"/></svg>
<svg class="r" style="left:1576px;top:975px;" width="18" height="18" viewBox="0 0 18 18"><rect x="1.6" y="1.6" width="14.9" height="14.6" fill="none" stroke="#2e86fb" stroke-width="2.7"/><rect x="11.5" y="4" width="2.5" height="10" fill="#2e86fb"/></svg>
</body></html>
